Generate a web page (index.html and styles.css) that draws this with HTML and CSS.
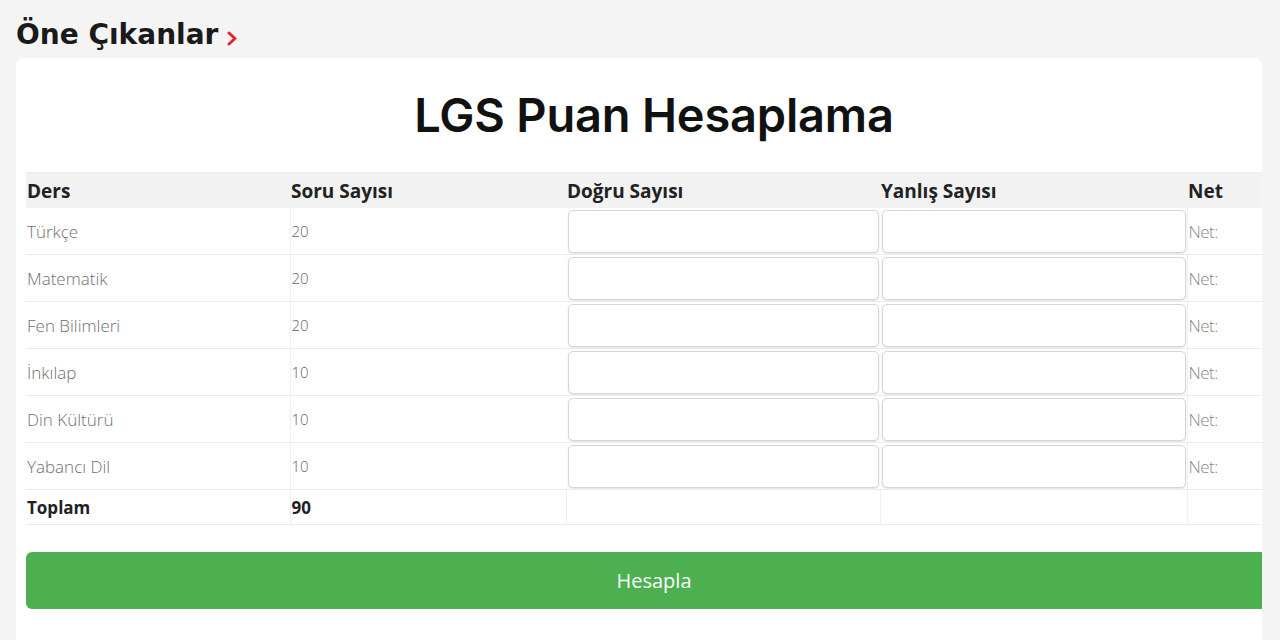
FILE: index.html
```html
<!DOCTYPE html>
<html lang="tr">
<head>
<meta charset="utf-8">
<title>LGS Puan Hesaplama</title>
<link rel="stylesheet" href="styles.css">
</head>
<body>
<div class="section-head">
  <span class="section-title">Öne Çıkanlar</span>
  <svg class="chev" width="12" height="16" viewBox="0 0 12 16"><path d="M3 3 L9 8.5 L3 14" fill="none" stroke="#e3262f" stroke-width="3" stroke-linecap="round" stroke-linejoin="round"/></svg>
</div>
<div class="card">
  <h1 class="calc-title">LGS Puan Hesaplama</h1>
  <table class="calc">
    <colgroup>
      <col class="c1"><col class="c2"><col class="c3"><col class="c4"><col class="c5">
    </colgroup>
    <thead>
      <tr><th>Ders</th><th>Soru Sayısı</th><th>Doğru Sayısı</th><th>Yanlış Sayısı</th><th>Net</th></tr>
    </thead>
    <tbody>
      <tr><td>Türkçe</td><td class="num">20</td><td class="in"><input type="text"></td><td class="in"><input type="text"></td><td class="net">Net:</td></tr>
      <tr><td>Matematik</td><td class="num">20</td><td class="in"><input type="text"></td><td class="in"><input type="text"></td><td class="net">Net:</td></tr>
      <tr><td>Fen Bilimleri</td><td class="num">20</td><td class="in"><input type="text"></td><td class="in"><input type="text"></td><td class="net">Net:</td></tr>
      <tr><td>İnkılap</td><td class="num">10</td><td class="in"><input type="text"></td><td class="in"><input type="text"></td><td class="net">Net:</td></tr>
      <tr><td>Din Kültürü</td><td class="num">10</td><td class="in"><input type="text"></td><td class="in"><input type="text"></td><td class="net">Net:</td></tr>
      <tr><td>Yabancı Dil</td><td class="num">10</td><td class="in"><input type="text"></td><td class="in"><input type="text"></td><td class="net">Net:</td></tr>
      <tr class="total"><td>Toplam</td><td>90</td><td></td><td></td><td></td></tr>
    </tbody>
  </table>
  <button class="btn" type="button">Hesapla</button>
</div>
</body>
</html>
```
FILE: styles.css
```css
html, body {
  margin: 0;
  padding: 0;
  background: #f4f4f4;
}
body {
  font-family: "Open Sans", "Lato", sans-serif;
  color: #222;
  height: 640px;
  overflow: hidden;
}
.section-head {
  display: flex;
  align-items: center;
  gap: 8px;
  padding: 18px 0 0 16px;
  height: 52px;
  box-sizing: border-box;
}
.section-title {
  font-family: "DejaVu Sans", "Inter", sans-serif;
  font-weight: 700;
  font-size: 28px;
  color: #1a1a1a;
  line-height: 34px;
}
.chev {
  margin-top: 6px;
}
.card {
  margin: 6px 0 0 16px;
  width: 1246px;
  background: #fff;
  border-radius: 8px 8px 0 0;
  padding: 0 0 40px 10px;
  box-sizing: border-box;
  overflow: hidden;
}
.calc-title {
  margin: 0;
  height: 114px;
  line-height: 114px;
  text-align: center;
  font-family: "Inter", "Lato", sans-serif;
  font-weight: 600;
  font-size: 47px;
  color: #111;
  letter-spacing: -0.2px;
  padding-left: 20px;
}
.calc {
  width: 1236px;
  border-collapse: collapse;
  table-layout: fixed;
}
.c1 { width: 264px; }
.c2 { width: 276px; }
.c3 { width: 314px; }
.c4 { width: 307px; }
.c5 { width: 75px; }
.calc th {
  background: #f2f2f2;
  text-align: left;
  font-weight: 700;
  font-size: 19px;
  color: #222;
  height: 35px;
  padding: 0 0 0 1px;
  border-top: 1px solid #ececec;
}
.calc td {
  height: 44px;
  padding: 0 0 0 1px;
  border-bottom: 1px solid #ececec;
  border-left: 1px solid #f0f0f0;
  font-size: 17px;
  font-weight: 300;
  color: #6f6f6f;
}
.calc td:first-child {
  border-left: none;
}
.calc td.num {
  font-size: 15px;
  color: #666;
}
.calc td.net {
  font-size: 17px;
  color: #888;
  letter-spacing: -0.5px;
}
.calc td.in {
  padding: 1px 1px 1px 2px;
  border-left: none;
}
.calc td.in input {
  display: block;
  width: 100%;
  height: 43px;
  box-sizing: border-box;
  border: 1px solid #d6d6d6;
  border-radius: 5px;
  box-shadow: 0 1px 2px rgba(0,0,0,0.12);
  margin: 0;
  font-size: 16px;
}
.calc tr.total td {
  height: 34px;
  font-weight: 700;
  color: #222;
  font-size: 17px;
}
.btn {
  display: block;
  margin-top: 27px;
  width: 100%;
  height: 57px;
  border: none;
  border-radius: 6px 0 0 6px;
  background: #4caf50;
  color: #fff;
  font-family: "Open Sans", "Lato", sans-serif;
  font-size: 20px;
  padding: 0 0 0 20px;
}
```
